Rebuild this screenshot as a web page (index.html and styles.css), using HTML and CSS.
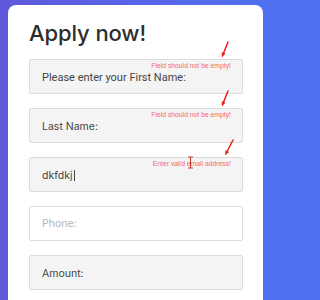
FILE: index.html
```html
<!DOCTYPE html>
<html>
<head>
<meta charset="utf-8">
<link rel="stylesheet" href="styles.css">
</head>
<body>
<div class="card">
  <h1 class="title">Apply now!</h1>
  <div class="field">
    <div class="box"><span class="label roboto">Please enter your First Name:</span></div>
    <span class="err">Field should not be empty!</span>
    <svg class="arrow" width="12" height="19" viewBox="0 0 12 19"><path d="M10 2 L5.6 13" stroke="#ee1c1c" stroke-width="1.5" stroke-linecap="round" fill="none"/><path d="M4 17.5 L7.5 13.4 L3.7 12.2 Z" fill="#ee1c1c"/></svg>
  </div>
  <div class="field">
    <div class="box"><span class="label">Last Name:</span></div>
    <span class="err">Field should not be empty!</span>
    <svg class="arrow" width="12" height="19" viewBox="0 0 12 19"><path d="M10 2 L5.6 13" stroke="#ee1c1c" stroke-width="1.5" stroke-linecap="round" fill="none"/><path d="M4 17.5 L7.5 13.4 L3.7 12.2 Z" fill="#ee1c1c"/></svg>
  </div>
  <div class="field">
    <div class="box"><span class="label">dkfdkj</span><span class="caret"></span></div>
    <span class="err">Enter valid email address!</span>
    <svg class="arrow a3" width="14" height="19" viewBox="0 0 14 19"><path d="M12 2 L6.3 13" stroke="#ee1c1c" stroke-width="1.5" stroke-linecap="round" fill="none"/><path d="M4 17.5 L8.1 14 L4.6 12.2 Z" fill="#ee1c1c"/></svg>
    <svg class="ibeam" width="7" height="13" viewBox="0 0 7 13"><path d="M1 1 H6 M3.5 1 V12 M1 12 H6" stroke="#c0392b" stroke-width="1" fill="none"/></svg>
  </div>
  <div class="field">
    <div class="box white"><span class="label ph">Phone:</span></div>
  </div>
  <div class="field">
    <div class="box"><span class="label">Amount:</span></div>
  </div>
</div>
</body>
</html>
```
FILE: styles.css
```css
html, body {
  margin: 0;
  height: 300px;
  overflow: hidden;
}
html {
  background: linear-gradient(90deg, #5f58dc 0px, #5865e6 135px, #4f71f2 269px, #4f71f2 100%);
}
body {
  width: 269px;
  font-family: "Open Sans", "Liberation Sans", sans-serif;
}
.card {
  margin: 5px 0 0 8px;
  width: 255px;
  background: #fff;
  border-radius: 8px 8px 0 0;
  padding: 15px 20px 20px 21px;
  height: 300px;
  box-sizing: border-box;
}
.title {
  margin: 0;
  font-family: Inter, "Noto Sans", sans-serif;
  font-weight: 500;
  font-size: 22px;
  line-height: 26px;
  color: #2e2e2e;
  letter-spacing: -0.1px;
}
.field {
  position: relative;
  margin-top: 13px;
}
.field + .field {
  margin-top: 14px;
}
.box {
  height: 35px;
  box-sizing: border-box;
  border: 1px solid #dcdcdc;
  border-radius: 2px;
  background: #f4f4f4;
  display: flex;
  align-items: center;
  padding: 2px 11px 0 12px;
}
.box.white {
  background: #fff;
  padding-top: 0;
}
.label {
  font-family: Inter, "Noto Sans", sans-serif;
  font-size: 10.5px;
  color: #444;
}
.label.roboto {
  font-family: Roboto, "Liberation Sans", sans-serif;
  font-size: 11px;
}
.label.ph {
  color: #b5b5b5;
}
.caret {
  display: inline-block;
  width: 1px;
  height: 11px;
  background: #444;
  margin-left: 1px;
}
.err {
  position: absolute;
  right: 12px;
  top: 3px;
  font-family: "Liberation Sans", sans-serif;
  font-size: 6.8px;
  line-height: 7px;
  color: #f26b6b;
}
.arrow {
  position: absolute;
  left: 189px;
  top: -19px;
}
.arrow.a3 {
  left: 192px;
}
.ibeam {
  position: absolute;
  left: 158px;
  top: -1px;
}
```
